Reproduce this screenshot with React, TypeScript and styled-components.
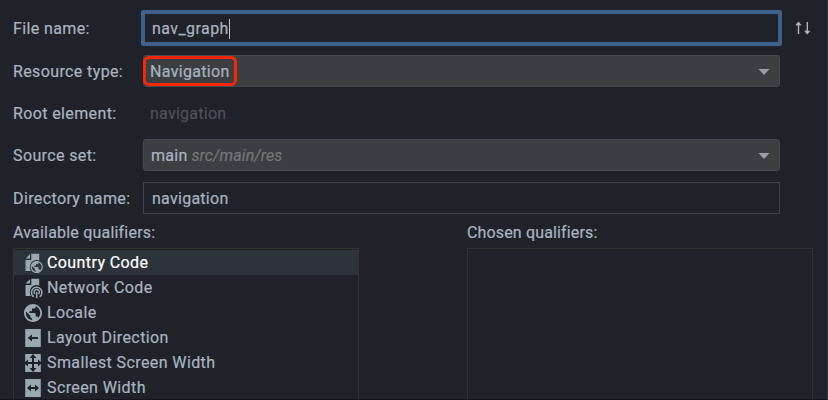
import React from "react";
import styled, { createGlobalStyle } from "styled-components";

const GlobalStyle = createGlobalStyle`
  * { box-sizing: border-box; }
  body { margin: 0; background: #1f2129; overflow: hidden; }
`;

const Dialog = styled.main`
  width: 828px;
  height: 400px;
  overflow: hidden;
  padding: 10px 0 0 13px;
  background: #1f2229;
  border-right: 1px solid #343942;
  border-bottom: 1px solid #17151e;
  color: #a9b4c0;
  font: 16px/20px Roboto, "Liberation Sans", sans-serif;
  letter-spacing: 0.25px;
  -webkit-text-stroke: 0.2px currentColor;
`;

const FormRow = styled.div<{ $gap?: number; $height?: number }>`
  display: grid;
  grid-template-columns: 130px 637px 1fr;
  align-items: center;
  height: ${(p) => p.$height ?? 32}px;
  margin-top: ${(p) => p.$gap ?? 0}px;
`;

const Label = styled.label`
  padding-top: 2px;
  white-space: nowrap;
  letter-spacing: 0.38px;
`;

const TextField = styled.div<{ $focused?: boolean }>`
  display: flex;
  align-items: center;
  height: ${(p) => (p.$focused ? 36 : 32)}px;
  margin: 0 ${(p) => (p.$focused ? -2 : 0)}px;
  padding: ${(p) => (p.$focused ? "1px 0 0 7px" : "1px 0 0 8px")};
  border: ${(p) => (p.$focused ? "4px solid #3d6188" : "1px solid #3b444d")};
  border-radius: ${(p) => (p.$focused ? 2 : 0)}px;
  letter-spacing: ${(p) => (p.$focused ? 0.42 : 0.27)}px;
`;

const Caret = styled.span`
  width: 1px;
  height: 20px;
  background: #c2c5c8;
`;

const ComboBox = styled.div`
  display: flex;
  align-items: center;
  height: 32px;
  padding-right: 9px;
  border: 1px solid #414b51;
  border-radius: 3px;
  background: #3c3f41;

  svg { margin: 1px 0 0 auto; }
`;

const Highlight = styled.span`
  display: flex;
  align-items: center;
  width: 94px;
  height: 30px;
  margin-left: -1px;
  padding: 2px 0 0 4px;
  border: 3px solid #fb2508;
  border-radius: 6px;
  letter-spacing: 0.32px;
`;

const Value = styled.span`
  padding: 2px 0 0 7px;
`;

const Path = styled.em`
  margin-left: 4px;
  padding-top: 2px;
  color: #747779;
  letter-spacing: 0.1px;
`;

const Disabled = styled.span`
  padding: 2px 0 0 7px;
  color: #505257;
`;

const SortIcon = styled.svg`
  margin-left: 14px;
`;

const Lists = styled.div`
  display: grid;
  grid-template-columns: 346px 346px;
  column-gap: 108px;
  margin-top: 8px;
`;

const Section = styled.section`
  display: grid;
  grid-template-rows: 20px 153px;
  row-gap: 6px;
`;

const SectionTitle = styled.div<{ $spacing: number }>`
  padding-top: 1px;
  letter-spacing: ${(p) => p.$spacing}px;
`;

const ListBox = styled.div`
  padding-top: 1px;
  border: 1px solid #333333;
`;

const ListRow = styled.div<{ $selected?: boolean }>`
  display: flex;
  align-items: center;
  gap: 4px;
  height: 25px;
  padding-left: 9px;
  white-space: nowrap;
  letter-spacing: 0.4px;
  color: ${(p) => (p.$selected ? "#ffffff" : "#a9b4c0")};
  background: ${(p) => (p.$selected ? "#2d333a" : "transparent")};
`;

type IconKind = "country" | "network" | "locale" | "left" | "smallest" | "width";

const Globe = () => (
  <path
    transform="translate(-.8 -.8) scale(.9)"
    fill="#9ba8b0"
    d="M12 2C6.48 2 2 6.48 2 12s4.48 10 10 10 10-4.48 10-10S17.52 2 12 2zm-1 17.93c-3.95-.49-7-3.85-7-7.93 0-.62.08-1.21.21-1.79L9 15v1c0 1.1.9 2 2 2v1.93zm6.9-2.54c-.26-.81-1-1.39-1.9-1.39h-1v-3c0-.55-.45-1-1-1H8v-2h2c.55 0 1-.45 1-1V7h2c1.1 0 2-.9 2-2v-.41c2.93 1.19 5 4.06 5 7.41 0 2.08-.8 3.97-2.1 5.39z"
  />
);

function QualifierIcon({ kind, cut }: { kind: IconKind; cut: string }) {
  const documentShape = (
    <path d="M8.3.8H16.2V18H2.5V6.9H8.3Z M7 1.2V5.6H2.6Z" fill="#9ba8b0" />
  );
  const page = <path d="M2.2 1H17.8V19H2.2Z" fill="#9ba8b0" />;
  return (
    <svg width="20" height="20" viewBox="0 0 20 20" aria-hidden="true">
      {kind === "locale" && <Globe />}
      {kind === "country" && (
        <>
          {documentShape}
          <circle cx="13.7" cy="14" r="7" fill={cut} />
          <g transform="translate(6.9 7.2) scale(.68)"><Globe /></g>
        </>
      )}
      {kind === "network" && (
        <>
          {documentShape}
          <circle cx="13.7" cy="14" r="7" fill={cut} />
          <path d="M10.7 18.8A5.2 5.2 0 1 1 16.7 18.8 M11.9 16A2.6 2.6 0 1 1 15.5 16 M13.7 14V20" fill="none" stroke="#9ba8b0" strokeWidth="1.5" />
        </>
      )}
      {kind === "left" && (
        <>{page}<path d="M4.6 10 9 6.5V9H15V11H9V13.5Z" fill={cut} /></>
      )}
      {kind === "smallest" && (
        <>
          {page}
          <path d="m10 1 3.5 4H11v4h4V6.5L19 10l-4 3.5V11h-4v4h2.5L10 19l-3.5-4H9v-4H5v2.5L1 10l4-3.500V9h4V5H6.500Z" fill={cut} />
        </>
      )}
      {kind === "width" && (
        <>{page}<path d="m4 10 4-3.5V9h4V6.5L16 10l-4 3.5V11H8v2.5Z" fill={cut} /></>
      )}
    </svg>
  );
}

const DropdownArrow = () => (
  <svg width="12" height="6" viewBox="0 0 12 6" aria-hidden="true">
    <path d="M.5 0h11L6 6Z" fill="#9b9fa3" />
  </svg>
);

const qualifiers: { name: string; kind: IconKind }[] = [
  { name: "Country Code", kind: "country" },
  { name: "Network Code", kind: "network" },
  { name: "Locale", kind: "locale" },
  { name: "Layout Direction", kind: "left" },
  { name: "Smallest Screen Width", kind: "smallest" },
  { name: "Screen Width", kind: "width" },
];

export default function App() {
  return (
    <>
      <GlobalStyle />
      <Dialog>
        <FormRow $height={36}>
          <Label>File name:</Label>
          <TextField $focused>nav_graph<Caret /></TextField>
          <SortIcon width="17" height="14" viewBox="0 0 17 14" aria-label="Sort">
            <path d="M4.5 3V13M13.3 1V11" stroke="#b1b4b7" strokeWidth="1.4" />
            <path d="M4.5.5 7.7 4.2H1.3ZM13.3 13.5l3.2-3.7h-6.4Z" fill="#b1b4b7" />
          </SortIcon>
        </FormRow>
        <FormRow $gap={9}>
          <Label>Resource type:</Label>
          <ComboBox><Highlight>Navigation</Highlight><DropdownArrow /></ComboBox>
        </FormRow>
        <FormRow $gap={10}>
          <Label>Root element:</Label>
          <Disabled>navigation</Disabled>
        </FormRow>
        <FormRow $gap={10}>
          <Label>Source set:</Label>
          <ComboBox><Value>main</Value><Path>src/main/res</Path><DropdownArrow /></ComboBox>
        </FormRow>
        <FormRow $gap={11}>
          <Label>Directory name:</Label>
          <TextField>navigation</TextField>
        </FormRow>
        <Lists>
          <Section>
            <SectionTitle $spacing={0.2}>Available qualifiers:</SectionTitle>
            <ListBox>
              {qualifiers.map((item, index) => (
                <ListRow key={item.name} $selected={index === 0}>
                  <QualifierIcon kind={item.kind} cut={index === 0 ? "#2d333a" : "#1f2229"} />
                  {item.name}
                </ListRow>
              ))}
            </ListBox>
          </Section>
          <Section>
            <SectionTitle $spacing={0.15}>Chosen qualifiers:</SectionTitle>
            <ListBox />
          </Section>
        </Lists>
      </Dialog>
    </>
  );
}
